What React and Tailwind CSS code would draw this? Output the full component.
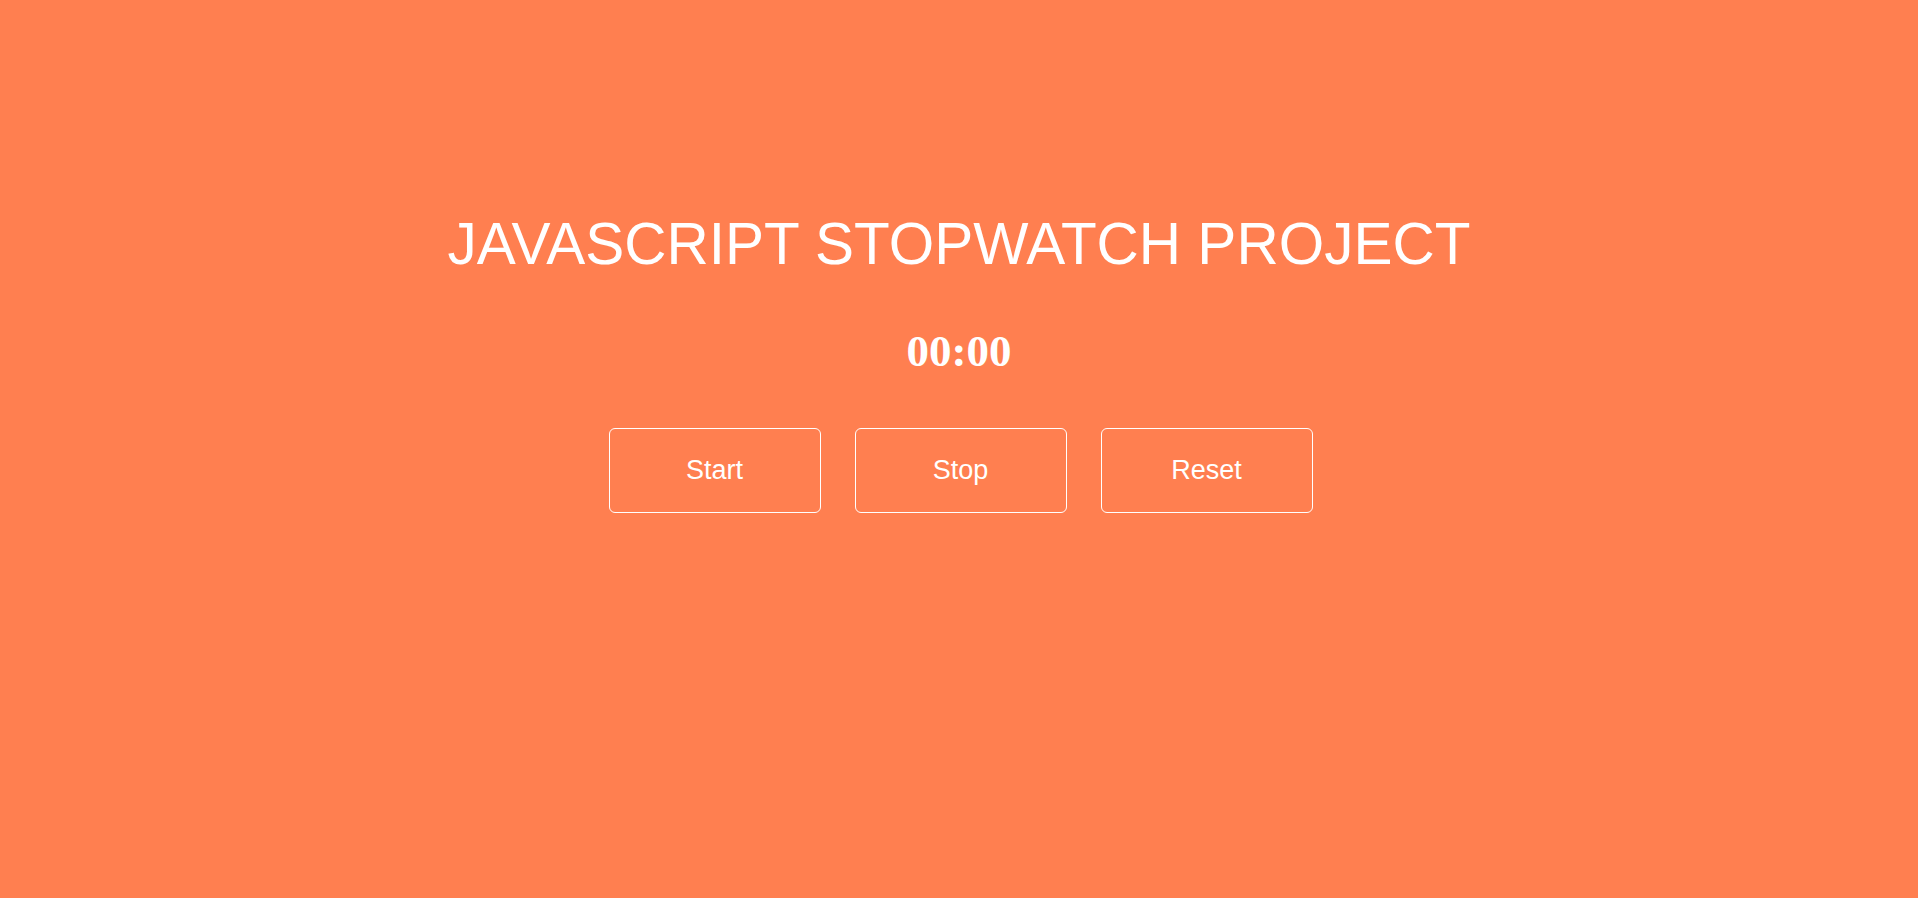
export default function App() {
  const buttons = ["Start", "Stop", "Reset"];
  return (
    <div className="min-h-[898px] w-full bg-[#ff7f50] flex flex-col items-center text-white font-['Liberation_Sans',Arial,sans-serif]">
      <h1 className="mt-[215px] text-[58.5px] leading-none font-normal">
        JAVASCRIPT STOPWATCH PROJECT
      </h1>
      <div className="mt-[55.5px] text-[45px] leading-none font-bold font-['Liberation_Serif','Times_New_Roman',serif]">
        00:00
      </div>
      <div className="mt-[54px] ml-[3px] flex gap-[34px]">
        {buttons.map((b) => (
          <button
            key={b}
            className="w-[212px] h-[85px] border border-white rounded-[6px] flex items-center justify-center text-[27px] text-white bg-transparent"
          >
            {b}
          </button>
        ))}
      </div>
    </div>
  );
}
